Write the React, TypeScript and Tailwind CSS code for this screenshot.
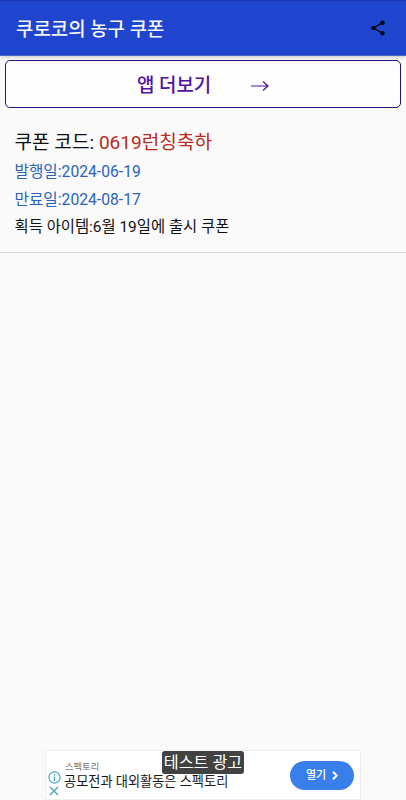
import React from "react";

function ShareIcon() {
  return (
    <svg className="h-[18px] w-[18px]" viewBox="0 0 24 24" fill="#050914">
      <path d="M18 16.08c-.76 0-1.44.3-1.96.77L8.91 12.7c.05-.23.09-.46.09-.7s-.04-.47-.09-.7l7.05-4.11c.54.5 1.25.81 2.04.81 1.66 0 3-1.34 3-3s-1.34-3-3-3-3 1.34-3 3c0 .24.04.47.09.7L8.04 9.81C7.5 9.31 6.79 9 6 9c-1.66 0-3 1.34-3 3s1.34 3 3 3c.79 0 1.5-.31 2.04-.81l7.12 4.16c-.05.21-.08.43-.08.65 0 1.61 1.31 2.92 2.92 2.92s2.92-1.31 2.92-2.92-1.31-2.92-2.92-2.92z" />
    </svg>
  );
}

function Header() {
  return (
    <header className="flex h-[56px] shrink-0 items-center justify-between border-t border-b border-t-[#1c35b4] border-b-[#4a68c4] bg-[#1f44cd] pr-[19px] pl-[16px] shadow-[0_1px_4px_rgba(0,0,0,0.22)]">
      <h1 className="pt-[3px] text-[18.9px] leading-[28px] font-medium text-[#f4f7ff]">쿠로코의 농구 쿠폰</h1>
      <ShareIcon />
    </header>
  );
}

function MoreAppsButton() {
  return (
    <button className="mx-[5px] mt-[4px] flex h-[48px] shrink-0 items-center rounded-[5px] border-[1.5px] border-[#2c0d84] bg-[#fdfdfe] pl-[131px] text-[#5210a4]">
      <span className="w-[114px] pt-[4px] text-left text-[18.9px] leading-[28px] font-medium whitespace-nowrap">앱 더보기</span>
      <svg className="mt-[3px] h-[12px] w-[18px]" viewBox="0 0 18 12" fill="none" stroke="currentColor" strokeWidth="1.2">
        <path d="M0 6H17M12 1.5L17 6L12 10.5" />
      </svg>
    </button>
  );
}

function Coupon() {
  return (
    <section className="flex h-[145px] shrink-0 flex-col border-b border-[#dadada] pt-[20px] pl-[14.5px] whitespace-nowrap">
      <p className="text-[19.1px] leading-[30px] text-[#111]">
        쿠폰 코드: <span className="text-[#b92a20]">0619런칭축하</span>
      </p>
      <p className="text-[15.7px] leading-[28px] text-[#2b63bb]">발행일:2024-06-19</p>
      <p className="text-[15.7px] leading-[28px] text-[#2b63bb]">만료일:2024-08-17</p>
      <p className="text-[15.4px] leading-[27px] text-[#111]">획득 아이템:6월 19일에 출시 쿠폰</p>
    </section>
  );
}

function AdBanner() {
  return (
    <aside className="relative mx-auto mt-auto flex h-[50px] w-[316px] shrink-0 border border-[#eeeeee] bg-white">
      <div className="flex w-[18px] flex-col items-start pt-[20px] pl-[1.5px]">
        <svg className="h-[13px] w-[13px]" viewBox="0 0 13 13" fill="none" stroke="#43a3ba" strokeWidth="1.1">
          <circle cx="6.5" cy="6.5" r="5.6" />
          <path d="M6.5 5.5V10M6.5 3V4.4" strokeWidth="1.4" />
        </svg>
        <svg className="mt-[2px] ml-[1.5px] h-[10px] w-[10px]" viewBox="0 0 10 10" fill="none" stroke="#43a3ba" strokeWidth="1.3">
          <path d="M1 1L9 9M9 1L1 9" />
        </svg>
      </div>
      <div className="flex flex-1 flex-col pt-[10px] whitespace-nowrap">
        <span className="pl-[1px] text-[9.3px] leading-[12px] text-[#777]">스펙토리</span>
        <span className="text-[13.2px] leading-[18px] text-[#171717]">공모전과 대외활동은 스펙토리</span>
      </div>
      <button className="mt-[10px] mr-[6px] flex h-[29px] w-[64px] items-center justify-center gap-[6px] rounded-full bg-[#387fec] text-[11px] leading-[16px] font-medium text-white">
        열기
        <svg className="h-[9px] w-[6px]" viewBox="0 0 6 9" fill="none" stroke="currentColor" strokeWidth="2">
          <path d="M1 0.8L4.7 4.5L1 8.2" />
        </svg>
      </button>
      <span className="absolute top-0 left-[116px] flex h-[23px] w-[82px] items-center justify-center rounded-[3px] bg-[#424242] pt-[1px] text-[16.2px] leading-[22px] whitespace-nowrap text-white">
        테스트 광고
      </span>
    </aside>
  );
}

export default function App() {
  return (
    <main className="flex h-[800px] w-[406px] flex-col overflow-hidden bg-[#fafafa] font-[Roboto,'Noto_Sans_CJK_KR',sans-serif]">
      <Header />
      <MoreAppsButton />
      <Coupon />
      <AdBanner />
    </main>
  );
}
